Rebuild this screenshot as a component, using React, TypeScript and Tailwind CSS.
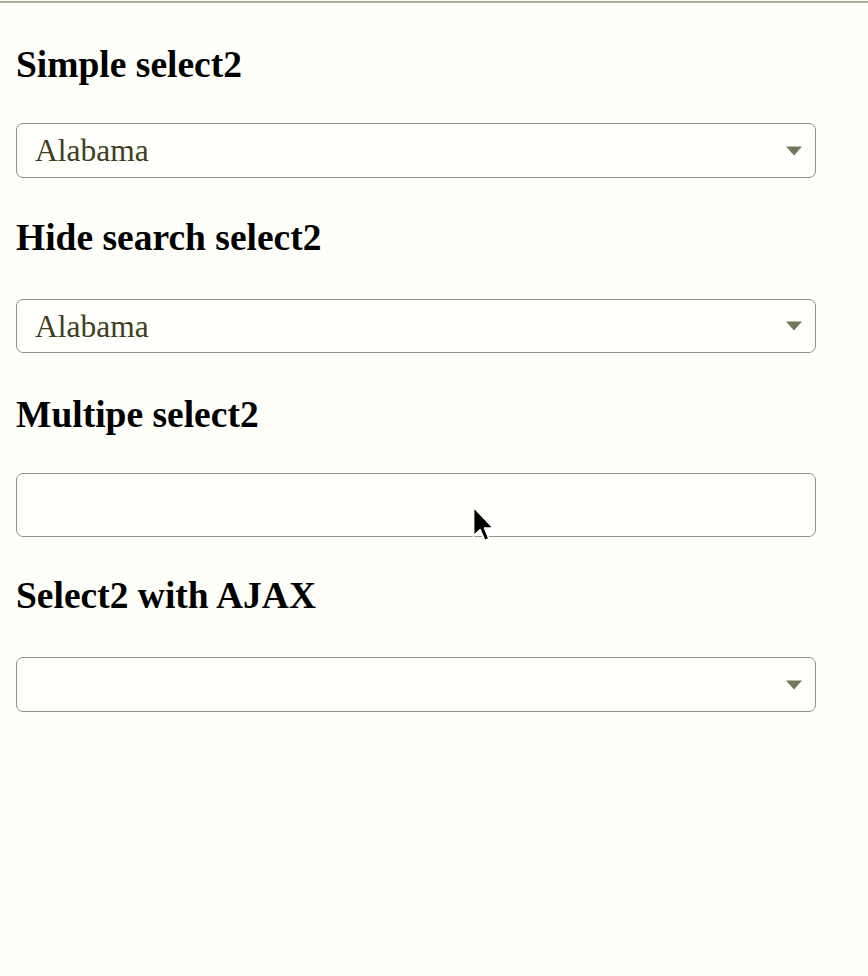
import React from "react"

type SelectProps = {
  value?: string
  arrow?: boolean
  className: string
}

function Arrow() {
  return (
    <span className="absolute right-[13px] top-1/2 -translate-y-1/2 w-0 h-0 border-l-[8px] border-r-[8px] border-t-[9px] border-l-transparent border-r-transparent border-t-[#76765a]" />
  )
}

function FakeSelect({ value, arrow = true, className }: SelectProps) {
  return (
    <div
      className={`relative w-[800px] flex items-center border border-[#929288] rounded-[7px] bg-[#fffffc] pl-[18px] ${className}`}
    >
      {value && <span className="text-[31.5px] leading-[31px] text-[#3f3f22]">{value}</span>}
      {arrow && <Arrow />}
    </div>
  )
}

function Cursor() {
  return (
    <svg
      className="absolute left-[471px] top-[505px]"
      width="25"
      height="38"
      viewBox="0 0 12 19"
    >
      <path
        d="M1 1 L1 15.5 L4.3 12.4 L6.6 17.8 L8.8 16.9 L6.6 11.6 L11 11.6 Z"
        fill="#000"
        stroke="#fff"
        strokeWidth="0.9"
        strokeLinejoin="round"
      />
    </svg>
  )
}

export default function App() {
  return (
    <div
      className="relative min-h-[976px] w-full bg-[#fffffa] text-black"
      style={{ fontFamily: '"Liberation Serif", "Times New Roman", serif' }}
    >
      {/* top rule */}
      <div className="h-[1px]" />
      <div className="h-[2px] bg-[#aeae98]" />

      <div className="px-4 pt-[43px]">
        <h3 className="text-[37.5px] leading-[37px] font-bold">Simple select2</h3>
        <FakeSelect value="Alabama" className="mt-[40px] h-[55px]" />

        <h3 className="mt-[41px] text-[37.5px] leading-[37px] font-bold">Hide search select2</h3>
        <FakeSelect value="Alabama" className="mt-[43px] h-[54px]" />

        <h3 className="mt-[43px] text-[37.5px] leading-[37px] font-bold">Multipe select2</h3>
        <FakeSelect arrow={false} className="mt-[40px] h-[64px]" />

        <h3 className="mt-[40px] text-[37.5px] leading-[37px] font-bold">Select2 with AJAX</h3>
        <FakeSelect className="mt-[43px] h-[55px]" />
      </div>

      <Cursor />
    </div>
  )
}
